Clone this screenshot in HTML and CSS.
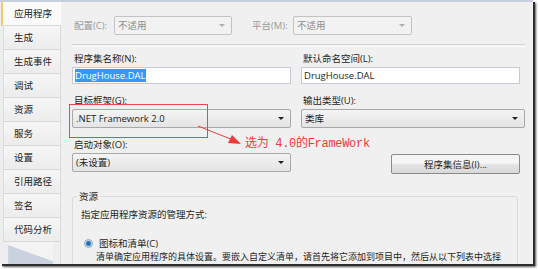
FILE: index.html
```html
<!DOCTYPE html>
<html lang="zh-CN">
<head>
<meta charset="UTF-8">
<title>应用程序</title>
<link rel="stylesheet" href="styles.css">
</head>
<body>
<div class="frame">
    <div class="window">
        <div class="nav">
            <div class="tab active">应用程序</div>
            <div class="tab">生成</div>
            <div class="tab">生成事件</div>
            <div class="tab">调试</div>
            <div class="tab">资源</div>
            <div class="tab">服务</div>
            <div class="tab">设置</div>
            <div class="tab">引用路径</div>
            <div class="tab">签名</div>
            <div class="tab">代码分析</div>
            <svg class="curl" width="61" height="30" viewBox="0 0 61 30">
                <polygon points="0,4 61,26 61,30 0,30" fill="#c9d2de"/>
                <polygon points="0,0 61,0 61,26 0,4" fill="#f3f3f3"/>
            </svg>
        </div>
        <div class="page">
            <div class="config-row">
                <span class="lbl dim cfg-lbl">配置(C):</span>
                <div class="combo disabled cfg">不适用<span class="arrow"></span></div>
                <span class="lbl dim plat-lbl">平台(M):</span>
                <div class="combo disabled plat">不适用<span class="arrow"></span></div>
            </div>
            <div class="sep"></div>
            <div class="fields">
                <div class="field">
                    <div class="lbl">程序集名称(N):</div>
                    <div class="textbox"><span class="selected">DrugHouse.DAL</span></div>
                </div>
                <div class="field">
                    <div class="lbl">默认命名空间(L):</div>
                    <div class="textbox short">DrugHouse.DAL</div>
                </div>
                <div class="field">
                    <div class="lbl">目标框架(G):</div>
                    <div class="combo">.NET Framework 2.0<span class="arrow"></span></div>
                </div>
                <div class="field">
                    <div class="lbl">输出类型(U):</div>
                    <div class="combo">类库<span class="arrow"></span></div>
                </div>
                <div class="field">
                    <div class="lbl">启动对象(O):</div>
                    <div class="combo">(未设置)<span class="arrow"></span></div>
                </div>
                <div class="field btn-cell">
                    <button class="btn">程序集信息(I)...</button>
                </div>
            </div>
            <div class="group">
                <span class="legend">资源</span>
                <div class="hint">指定应用程序资源的管理方式:</div>
                <div class="radio-row"><span class="radio"></span>图标和清单(C)</div>
                <div class="desc">清单确定应用程序的具体设置。要嵌入自定义清单，请首先将它添加到项目中，然后从以下列表中选择</div>
            </div>
        </div>
    </div>

    <div class="mark"></div>
    <svg class="arrow-line" width="48" height="24" viewBox="0 0 48 24">
        <line x1="1" y1="2" x2="36" y2="16" stroke="#ee3a3a" stroke-width="1"/>
        <polygon points="44,20 31,19 35,11" fill="#ee3a3a"/>
    </svg>
    <div class="note">选为 4.0的FrameWork</div>
</div>
</body>
</html>
```

FILE: styles.css
```css
body {
    margin: 0;
    background-color: #fff;
}

.frame {
    position: relative;
    width: 538px;
    height: 269px;
    font-family: "Open Sans", "Noto Sans CJK SC", sans-serif;
    font-size: 9.5px;
    color: #1e1e1e;
}

.window {
    display: flex;
    width: 533px;
    height: 262px;
    border-top: 2px solid #c6cfdb;
    background-color: #f0f0f0;
    box-shadow: 2px 2px 0 #2e2e2e, 3px 3px 2px #555;
    overflow: hidden;
}

/* left tab list */
.nav {
    width: 61px;
    flex-shrink: 0;
    display: flex;
    flex-direction: column;
    background-color: #eeeeee;
    border-right: 1px solid #dadada;
    box-sizing: border-box;
}

.tab {
    height: 24px;
    line-height: 24px;
    padding-left: 10px;
    margin-left: 3px;
    box-sizing: border-box;
    border-bottom: 1px solid #d9d9d9;
    border-left: 1px solid #dcdcdc;
    background: linear-gradient(#f6f6f6, #ececec);
    color: #222;
}

.tab.active {
    margin-left: 1px;
    padding-left: 11px;
    border-left: 2px solid #f3c869;
    background: #fbfbfb;
    margin-right: -1px;
}

.curl {
    display: block;
    margin-top: auto;
}

/* right page */
.page {
    flex: 1;
    padding: 14px 0 0 11px;
}

.lbl {
    display: block;
    height: 13px;
    line-height: 13px;
    margin-bottom: 2px;
    padding-left: 2px;
}

.dim {
    color: #9a9a9a;
}

.config-row {
    display: flex;
    align-items: center;
}

.config-row .lbl {
    margin-bottom: 0;
}

.cfg-lbl {
    width: 40px;
}

.plat-lbl {
    width: 41px;
    margin-left: 18px;
}

.cfg {
    width: 118px;
}

.plat {
    width: 119px;
}

.sep {
    height: 1px;
    margin: 9px 8px 0 0;
    border-top: 1px solid #d5d5d5;
    border-bottom: 1px solid #fff;
}

.fields {
    display: grid;
    grid-template-columns: 219px 224px;
    column-gap: 10px;
    row-gap: 10px;
    margin-top: 5px;
}

.textbox {
    height: 17px;
    line-height: 15px;
    box-sizing: border-box;
    border: 1px solid #c4cbd6;
    background-color: #fff;
    padding-left: 2px;
}

.textbox.short {
    width: 219px;
}

.selected {
    background-color: #3399ff;
    color: #fff;
}

.combo {
    position: relative;
    height: 19px;
    line-height: 17px;
    box-sizing: border-box;
    border: 1px solid #a8a8a8;
    border-radius: 2px;
    padding-left: 3px;
    background: linear-gradient(#f4f4f4, #e4e4e4);
}

.combo.disabled {
    border-color: #c3c3c3;
    background: #f2f2f2;
    color: #8c8c8c;
}

.arrow {
    position: absolute;
    right: 6px;
    top: 7px;
    border-left: 3px solid transparent;
    border-right: 3px solid transparent;
    border-top: 3px solid #222;
}

.disabled .arrow {
    border-top-color: #b0b0b0;
}

.btn-cell {
    display: flex;
    justify-content: flex-end;
    align-items: flex-end;
}

.btn {
    width: 129px;
    height: 20px;
    margin: 0 5px -2px 0;
    font-family: inherit;
    font-size: 9.5px;
    color: #1e1e1e;
    border: 1px solid #8a8a8a;
    border-radius: 2px;
    background: linear-gradient(#f5f5f5 45%, #e2e2e2 55%, #d9d9d9);
}

/* resources group */
.group {
    position: relative;
    width: 446px;
    height: 90px;
    margin-top: 24px;
    box-sizing: border-box;
    border: 1px solid #dcdcdc;
    border-radius: 3px;
    padding: 11px 0 0 8px;
}

.legend {
    position: absolute;
    left: 4px;
    top: -8px;
    padding: 0 2px;
    background-color: #f0f0f0;
}

.hint {
    line-height: 13px;
}

.radio-row {
    display: flex;
    align-items: center;
    margin-top: 16px;
    margin-left: 3px;
    line-height: 13px;
}

.radio {
    width: 7px;
    height: 7px;
    margin-right: 6px;
    border-radius: 50%;
    border: 1px solid #9aa3ad;
    background: radial-gradient(#1e6fb7 35%, #7fb3e0 55%, #fff 70%);
}

.desc {
    margin: 2px 0 0 15px;
    white-space: nowrap;
    font-size: 9px;
    line-height: 10px;
}

/* red annotation */
.mark {
    position: absolute;
    left: 69px;
    top: 104px;
    width: 137px;
    height: 32px;
    border: 1.5px solid #ea4848;
}

.arrow-line {
    position: absolute;
    left: 197px;
    top: 124px;
}

.note {
    position: absolute;
    left: 245px;
    top: 136px;
    font-family: "Liberation Mono", "Noto Sans CJK SC", monospace;
    font-size: 12px;
    letter-spacing: -0.3px;
    line-height: 16px;
    color: #f03a3a;
}
```
